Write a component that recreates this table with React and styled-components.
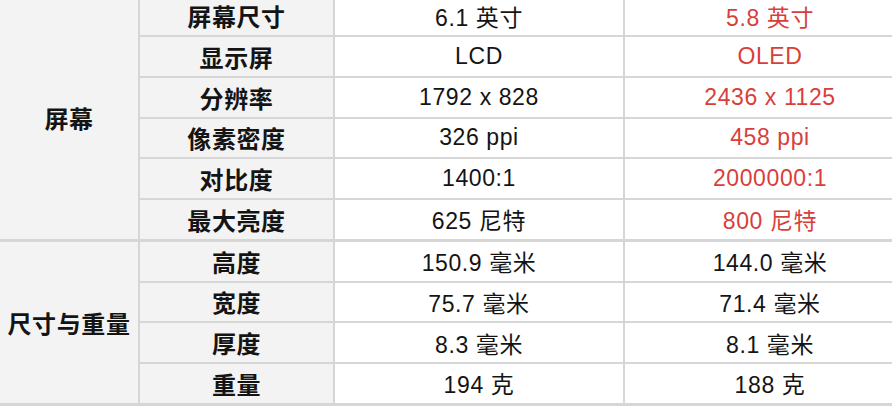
import styled, { createGlobalStyle } from 'styled-components';

const GlobalStyle = createGlobalStyle`
  html, body {
    margin: 0;
    padding: 0;
    background: #ffffff;
    overflow: hidden;
  }
`;

const sections = [
  {
    title: '屏幕',
    rows: [
      { label: '屏幕尺寸', a: '6.1 英寸', b: '5.8 英寸', hot: true },
      { label: '显示屏', a: 'LCD', b: 'OLED', hot: true },
      { label: '分辨率', a: '1792 x 828', b: '2436 x 1125', hot: true },
      { label: '像素密度', a: '326 ppi', b: '458 ppi', hot: true },
      { label: '对比度', a: '1400:1', b: '2000000:1', hot: true },
      { label: '最大亮度', a: '625 尼特', b: '800 尼特', hot: true },
    ],
  },
  {
    title: '尺寸与重量',
    rows: [
      { label: '高度', a: '150.9 毫米', b: '144.0 毫米' },
      { label: '宽度', a: '75.7 毫米', b: '71.4 毫米' },
      { label: '厚度', a: '8.3 毫米', b: '8.1 毫米' },
      { label: '重量', a: '194 克', b: '188 克' },
    ],
  },
];

function App() {
  return (
    <>
      <GlobalStyle />
      <SpecTable>
        {sections.map((section) => (
          <Section key={section.title} $rows={section.rows.length}>
            <SectionTitle $rows={section.rows.length}>{section.title}</SectionTitle>
            {section.rows.map((row) => (
              <Row key={row.label}>
                <Label>{row.label}</Label>
                <Value>{row.a}</Value>
                <Value $hot={row.hot}>{row.b}</Value>
              </Row>
            ))}
          </Section>
        ))}
      </SpecTable>
    </>
  );
}

const SpecTable = styled.div`
  display: flex;
  flex-direction: column;
  gap: 3px;
  width: 915px;
  margin-top: -3.75px;
  padding-bottom: 3px;
  background-color: #d6d6d6;
  font-family: "Liberation Sans", "Noto Sans CJK SC", sans-serif;
  font-size: 23px;
  color: #141414;
`;

const Section = styled.div`
  display: grid;
  grid-template-columns: 138px 193px 288px 1fr;
  grid-template-rows: repeat(${(p) => p.$rows}, 38.75px);
  gap: 2px;
`;

const SectionTitle = styled.div`
  grid-row: span ${(p) => p.$rows};
  display: flex;
  align-items: center;
  justify-content: center;
  background-color: #f3f3f3;
  font-size: 24px;
  font-weight: bold;
  letter-spacing: 0.6px;
`;

const Row = styled.div`
  display: contents;
`;

const Label = styled.div`
  display: flex;
  align-items: center;
  justify-content: center;
  background-color: #f3f3f3;
  font-size: 24px;
  font-weight: bold;
  letter-spacing: 0.6px;
`;

const Value = styled.div`
  display: flex;
  align-items: center;
  justify-content: center;
  background-color: #ffffff;
  letter-spacing: 0.6px;
  color: ${(p) => (p.$hot ? '#d83f3b' : '#141414')};
`;

export default App;
